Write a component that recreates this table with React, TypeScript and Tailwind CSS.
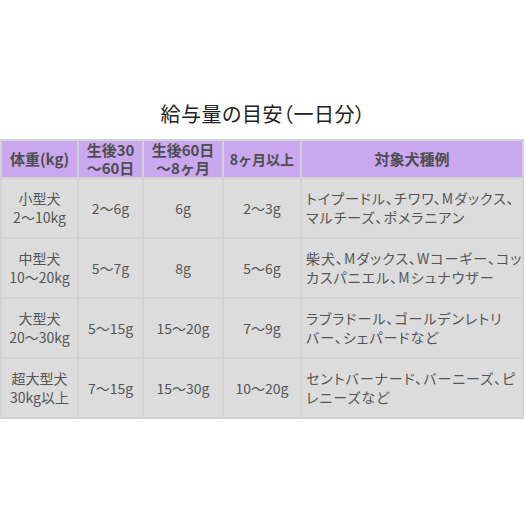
import React from "react"

const rows = [
	{ size: "小型犬", weight: "2～10kg", a: "2～6g", b: "6g", c: "2～3g", breeds: ["トイプードル、チワワ、Mダックス、", "マルチーズ、ポメラニアン"] },
	{ size: "中型犬", weight: "10～20kg", a: "5～7g", b: "8g", c: "5～6g", breeds: ["柴犬、Mダックス、Wコーギー、コッ", "カスパニエル、Mシュナウザー"] },
	{ size: "大型犬", weight: "20～30kg", a: "5～15g", b: "15～20g", c: "7～9g", breeds: ["ラブラドール、ゴールデンレトリ", "バー、シェパードなど"] },
	{ size: "超大型犬", weight: "30kg以上", a: "7～15g", b: "15～30g", c: "10～20g", breeds: ["セントバーナード、バーニーズ、ピ", "レニーズなど"] },
]

const App = () => {
	return (
		<div className="w-[526px] h-[526px] bg-white font-['Noto_Sans_CJK_JP',sans-serif] text-[#555]">
			<h1 className="pt-[101px] h-[139px] text-center text-[20px] leading-[26px] text-[#222] tracking-[0.5px] [font-feature-settings:'palt']">
				給与量の目安（一日分）
			</h1>
			<table className="w-[524px] table-fixed border-separate border-spacing-0.5 bg-[#d2d2d2] text-[14px] leading-[19px]">
				<colgroup>
					<col className="w-[75px]" />
					<col className="w-[63px]" />
					<col className="w-[78px]" />
					<col className="w-[76px]" />
					<col className="w-[220px]" />
				</colgroup>
				<thead>
					<tr className="h-[36px] bg-[#c9a8f0] font-bold text-[#4d4d4d] text-[15px] leading-[18px]">
						<th className="p-0 text-center">体重(kg)</th>
						<th className="p-0 text-center">生後30<br />～60日</th>
						<th className="p-0 text-center">生後60日<br />～8ヶ月</th>
						<th className="p-0 text-center text-[14px]">8ヶ月以上</th>
						<th className="p-0 text-center">対象犬種例</th>
					</tr>
				</thead>
				<tbody>
					{rows.map((r) => (
						<tr key={r.size} className="h-[58px] bg-[#dcdcdc]">
							<td className="p-0 text-center">{r.size}<br />{r.weight}</td>
							<td className="p-0 text-center">{r.a}</td>
							<td className="p-0 text-center">{r.b}</td>
							<td className="p-0 text-center">{r.c}</td>
							<td className="px-1 py-0 whitespace-nowrap tracking-[1px] [font-feature-settings:'palt']">
								{r.breeds[0]}<br />{r.breeds[1]}
							</td>
						</tr>
					))}
				</tbody>
			</table>
		</div>
	)
}

export default App
